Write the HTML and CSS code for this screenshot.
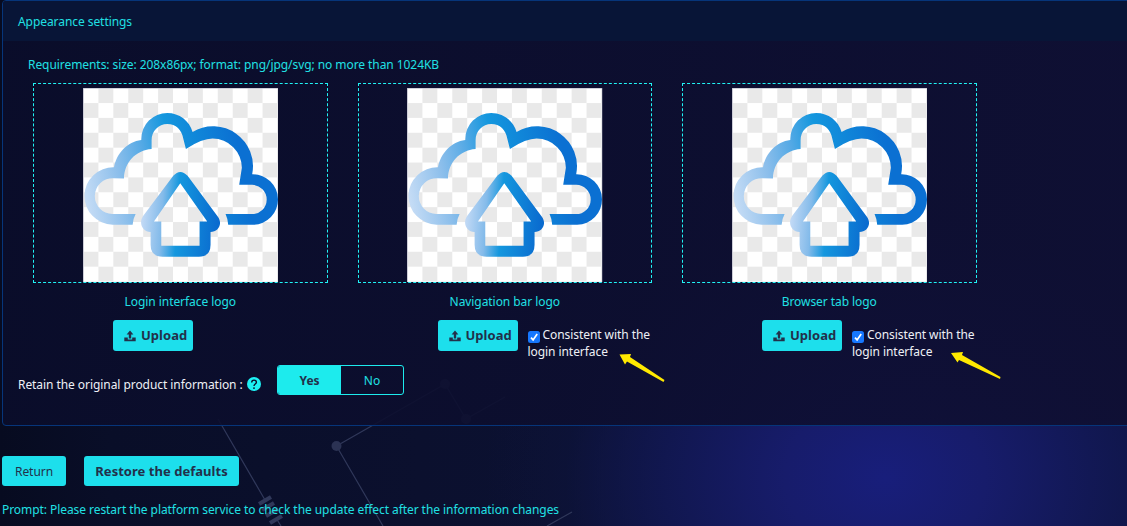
FILE: index.html
```html
<!DOCTYPE html>
<html lang="en">
<head>
<meta charset="utf-8">
<title>Appearance settings</title>
<link rel="stylesheet" href="styles.css">
</head>
<body>
<svg class="defs" width="0" height="0" aria-hidden="true">
  <defs>
    <pattern id="checker" x="158.500" y="24.500" width="89.600" height="89.400" patternUnits="userSpaceOnUse">
      <rect width="89.600" height="89.400" fill="#fff"/>
      <rect x="44.800" width="44.800" height="44.700" fill="#e9e9e9"/>
      <rect y="44.700" width="44.800" height="44.700" fill="#e9e9e9"/>
    </pattern>
    <linearGradient id="cloudFill" gradientUnits="userSpaceOnUse" x1="160" y1="380" x2="640" y2="290">
      <stop offset="0" stop-color="#c9def6"/>
      <stop offset=".25" stop-color="#8bbeeb"/>
      <stop offset=".42" stop-color="#54a9e5"/>
      <stop offset=".58" stop-color="#1497de"/>
      <stop offset="1" stop-color="#0b70d2"/>
    </linearGradient>
    <linearGradient id="arrowFill" gradientUnits="userSpaceOnUse" x1="335" y1="430" x2="560" y2="445">
      <stop offset="0" stop-color="#bfd8f5"/>
      <stop offset=".25" stop-color="#84bbea"/>
      <stop offset=".46" stop-color="#1497de"/>
      <stop offset="1" stop-color="#0a6bcf"/>
    </linearGradient>
    <symbol id="cloudLogo" viewBox="157 24 587 583" preserveAspectRatio="none">
      <rect x="157" y="24" width="587" height="583" fill="#b9bac8"/>
      <rect x="159" y="26" width="583" height="581" fill="url(#checker)"/>
      <path fill="url(#cloudFill)" d="M306 435H246A86.500 86.500 0 0 1 250 262C258 220 290 185 332 180V177A78 78 0 0 1 410 99C446 99 477 123 486 156A120 120 0 0 1 665 283A76 76 0 0 1 668 435H593Q592 418 585 403H664A44 44 0 0 0 665 315H626L634 264A88 88 0 0 0 546 176Q515 176 466 207L458 176C454 150 436 132 410 132C384 132 363 153 363 181V207C315 211 281 247 280 296L248 295A54 54 0 0 0 245 403H315Q307 418 306 435Z"/>
      <path fill="url(#arrowFill)" fill-rule="evenodd" d="M428 288Q449 265 471 288L562 411C578 434 562 457 540 457V495Q540 531 505 531H396Q360 531 360 495V457C335 455 323 430 338 408ZM449 310L370 425H392V498H507V425H530Z"/>
    </symbol>
    <symbol id="uploadIcon" viewBox="0 0 12 12">
      <path d="M6 .5L9.400 4.600H7.200V8.400H4.800V4.600H2.600ZM.3 7.500H3.800V9.400H8.200V7.500H11.700V11.300H.3Z"/>
    </symbol>
  </defs>
</svg>

<svg class="backdrop" width="1127" height="526" aria-hidden="true">
  <g stroke="#30385a" stroke-width="1.200" fill="none">
    <path d="M218 419L265 500M276 518L281 526M336.500 446L445 384L466 419L505 397M336.500 446L383 526M547 526L572 512"/>
    <path stroke-width="4" d="M259 504L271 497M262 510L274 503M266 516L278 509M270 523L282 516"/>
  </g>
  <g fill="#2b3253"><circle cx="336.500" cy="446" r="5"/><circle cx="445" cy="384" r="5"/><circle cx="466" cy="419" r="5"/></g>
</svg>

<main class="page">
  <section class="panel">
    <h1 class="panel-title">Appearance settings</h1>
    <div class="panel-body">
      <p class="requirements">Requirements: size: 208x86px; format: png/jpg/svg; no more than 1024KB</p>
      <div class="logos">
        <div class="logo-item">
          <div class="preview"><svg class="logo"><use href="#cloudLogo"/></svg></div>
          <div class="caption">Login interface logo</div>
          <div class="controls"><button class="btn upload"><svg class="up"><use href="#uploadIcon"/></svg>Upload</button></div>
        </div>
        <div class="logo-item">
          <div class="preview"><svg class="logo"><use href="#cloudLogo"/></svg></div>
          <div class="caption">Navigation bar logo</div>
          <div class="controls"><button class="btn upload"><svg class="up"><use href="#uploadIcon"/></svg>Upload</button>
            <label class="same"><span class="check"><svg viewBox="0 0 12 12"><path d="M3 6.600L5.100 8.900L9.200 3"/></svg></span>Consistent with the login interface</label></div>
        </div>
        <div class="logo-item">
          <div class="preview"><svg class="logo"><use href="#cloudLogo"/></svg></div>
          <div class="caption">Browser tab logo</div>
          <div class="controls"><button class="btn upload"><svg class="up"><use href="#uploadIcon"/></svg>Upload</button>
            <label class="same"><span class="check"><svg viewBox="0 0 12 12"><path d="M3 6.600L5.100 8.900L9.200 3"/></svg></span>Consistent with the login interface</label></div>
        </div>
      </div>
      <div class="retain">
        <span class="retain-label">Retain the original product information :</span>
        <svg class="help" viewBox="0 0 14 14"><circle cx="7" cy="7" r="7" fill="#1df0f3"/><path d="M4.700 5.400C4.700 2.300 9.400 2.400 9.400 5.200C9.400 7 7 7 7 8.900" fill="none" stroke="#0a0d2b" stroke-width="1.400"/><circle cx="7" cy="11.100" r=".95" fill="#0a0d2b"/></svg>
        <div class="toggle"><span class="on">Yes</span><span class="off">No</span></div>
      </div>
    </div>
  </section>
  <div class="actions">
    <button class="btn return">Return</button>
    <button class="btn restore">Restore the defaults</button>
  </div>
  <p class="prompt">Prompt: Please restart the platform service to check the update effect after the information changes</p>
</main>

<svg class="pointers" width="1127" height="526" aria-hidden="true">
  <path d="M619.500 354.500L631 354L630 357L664.500 380L663.500 382L627 361.500L625 364.500Z"/>
  <path d="M951 353L963 352L962 355L1000.500 377L1000 379L959 360L957.500 362.500Z"/>
</svg>
</body>
</html>
```
FILE: styles.css
```css
* { box-sizing: border-box; }
body {
  margin: 0;
  width: 1127px;
  height: 526px;
  overflow: hidden;
  position: relative;
  font: 12px/17px "Noto Sans", "Open Sans", sans-serif;
  letter-spacing: -.065px;
  color: #20e0e4;
  background:
    radial-gradient(ellipse 400px 330px at 885px 478px, #181e7b 0%, #171c6b 25%, rgba(18, 24, 85, .85) 55%, rgba(14, 20, 62, .4) 80%, rgba(12, 17, 50, 0) 100%),
    linear-gradient(90deg, #070b20 0, #090e28 110px, #0b102e 420px, #0d1540 1127px);
}
p, h1 { margin: 0; font-size: 12px; font-weight: 400; }
.defs { position: absolute; }
.backdrop, .pointers { position: absolute; left: 0; top: 0; }
.pointers { fill: #ffe900; pointer-events: none; }
.page { position: relative; padding-left: 2px; }
.panel {
  width: 1140px;
  height: 426px;
  border: 1px solid #06357a;
  border-radius: 4px;
  background: linear-gradient(90deg, rgba(10, 13, 43, .9), rgba(15, 15, 50, .9));
  overflow: hidden;
}
.panel-title { height: 40px; padding: 12px 15px; background: #081537; }
.panel-body { padding: 15px 0 0 15px; }
.requirements { padding-left: 10px; }
.logos { display: flex; gap: 30px; padding: 10px 0 0 15px; }
.logo-item { width: 294.500px; }
.preview {
  height: 200px;
  padding-top: 4px;
  border: 1px dashed #20f3f5;
  display: flex;
  justify-content: center;
  align-items: flex-start;
}
.logo { display: block; width: 195.500px; height: 194px; }
.caption { text-align: center; padding-top: 10px; }
.controls { display: flex; align-items: flex-start; padding: 10px 0 0 80px; gap: 10px; height: 51px; }
.btn {
  font: 700 13px/17px "Noto Sans", "Open Sans", sans-serif;
  letter-spacing: .03px;
  color: #22304a;
  background: #1ddfec;
  border: 0;
  border-radius: 3px;
  padding: 0;
}
.upload { width: 80px; height: 31px; flex: none; display: flex; align-items: center; padding-left: 11px; gap: 5px; }
.up { width: 12px; height: 12px; fill: #22304a; flex: none; }
.same { color: #eef0f6; width: 130px; padding-top: 6px; }
.check { display: inline-block; width: 12px; height: 12px; border-radius: 2.500px; background: #1677ff; vertical-align: -4px; margin-right: 3px; }
.check svg { display: block; fill: none; stroke: #fff; stroke-width: 1.700; }
.retain { display: flex; align-items: flex-start; padding-top: 4px; }
.retain-label { color: #eef0f6; padding-top: 11px; width: 229px; white-space: nowrap; }
.help { width: 14px; height: 14px; margin-top: 12px; }
.toggle { display: flex; width: 127px; height: 30px; margin-left: 16px; border: 1px solid #1debed; border-radius: 3px; overflow: hidden; line-height: 29px; text-align: center; }
.on { width: 63px; background: #1debed; color: #22304a; font-weight: 700; }
.off { flex: 1; }
.actions { display: flex; gap: 18px; padding-top: 30px; }
.return, .restore { height: 30px; }
.return { width: 64px; font-size: 12px; font-weight: 400; letter-spacing: -.06px; }
.restore { width: 155px; }
.prompt { padding-top: 15px; }
```
